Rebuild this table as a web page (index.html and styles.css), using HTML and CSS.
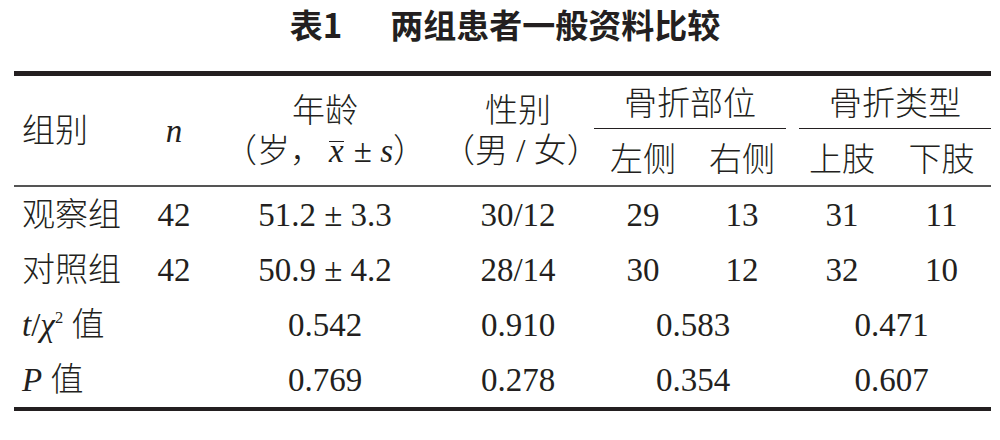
FILE: index.html
```html
<!DOCTYPE html>
<html lang="zh-CN">
<head>
  <meta charset="UTF-8">
  <title>表1 两组患者一般资料比较</title>
  <link rel="stylesheet" href="styles.css">
</head>
<body>
  <h1 class="caption"><span class="caption-no">表1</span><span>两组患者一般资料比较</span></h1>

  <div class="table-wrap">
    <table class="data">
      <colgroup>
        <col style="width: 116px">
        <col style="width: 88px">
        <col style="width: 214px">
        <col style="width: 162px">
        <col style="width: 98px">
        <col style="width: 100px">
        <col style="width: 100px">
        <col style="width: 99px">
      </colgroup>
      <thead>
        <tr class="head-top">
          <th rowspan="2" class="left">组别</th>
          <th rowspan="2"><i>n</i></th>
          <th rowspan="2" class="two-line">年龄<br>（岁，<i class="bar">x</i> ± <i>s</i>）</th>
          <th rowspan="2" class="two-line sex">性别<br>（男 / 女）</th>
          <th colspan="2"><div class="group group-a">骨折部位</div></th>
          <th colspan="2"><div class="group group-b">骨折类型</div></th>
        </tr>
        <tr class="head-sub">
          <th>左侧</th>
          <th>右侧</th>
          <th>上肢</th>
          <th>下肢</th>
        </tr>
      </thead>
      <tbody>
        <tr>
          <td class="left">观察组</td>
          <td>42</td>
          <td>51.2 ± 3.3</td>
          <td class="sex">30/12</td>
          <td>29</td>
          <td>13</td>
          <td>31</td>
          <td>11</td>
        </tr>
        <tr>
          <td class="left">对照组</td>
          <td>42</td>
          <td>50.9 ± 4.2</td>
          <td class="sex">28/14</td>
          <td>30</td>
          <td>12</td>
          <td>32</td>
          <td>10</td>
        </tr>
        <tr>
          <td class="left"><i>t</i>/<i>χ</i><sup>2</sup> 值</td>
          <td></td>
          <td>0.542</td>
          <td class="sex">0.910</td>
          <td colspan="2">0.583</td>
          <td colspan="2">0.471</td>
        </tr>
        <tr>
          <td class="left"><i>P</i> 值</td>
          <td></td>
          <td>0.769</td>
          <td class="sex">0.278</td>
          <td colspan="2">0.354</td>
          <td colspan="2">0.607</td>
        </tr>
      </tbody>
    </table>
  </div>
</body>
</html>
```

FILE: styles.css
```css
body {
  margin: 0;
  background-color: #fff;
  color: #231f20;
  font-family: "Liberation Serif", "Noto Sans CJK SC", serif;
}
.caption {
  margin: 0;
  padding-left: 10px;
  height: 48px;
  display: flex;
  justify-content: center;
  align-items: center;
  font-family: "Noto Sans CJK SC", sans-serif;
  font-size: 33px;
  font-weight: bold;
  line-height: 48px;
}
.caption-no {
  margin-right: 48px;
}
.table-wrap {
  margin: 23px 0 0 14px;
  width: 977px;
  border-top: 5px solid #231f20;
  border-bottom: 4px solid #231f20;
}
.data {
  width: 100%;
  border-collapse: collapse;
  table-layout: fixed;
  font-size: 33px;
  font-weight: 300;
}
.data th, .data td {
  padding: 0;
  text-align: center;
  font-weight: 300;
  white-space: nowrap;
}
.data thead {
  border-bottom: 2px solid #555;
}
.data .left {
  text-align: left;
  padding-left: 8px;
}
.data .sex {
  padding-left: 10px;
}
.head-top th {
  height: 53px;
  vertical-align: bottom;
}
.head-top th.two-line, .head-top th[rowspan] {
  vertical-align: middle;
  line-height: 40px;
}
.head-sub th {
  height: 56px;
  vertical-align: middle;
}
.group {
  line-height: 40px;
  padding-bottom: 4px;
  border-bottom: 1.5px solid #231f20;
}
.group-a {
  margin-right: 6px;
}
.group-b {
  margin-left: 7px;
}
.data tbody td {
  height: 55px;
  line-height: 40px;
  vertical-align: middle;
}
.bar {
  display: inline-block;
  line-height: 17px;
  padding-top: 1px;
  border-top: 1.5px solid #231f20;
  margin: 0 2px 0 6px;
}
sup {
  font-size: 0.5em;
  vertical-align: 0.8em;
  line-height: 0;
}
```
